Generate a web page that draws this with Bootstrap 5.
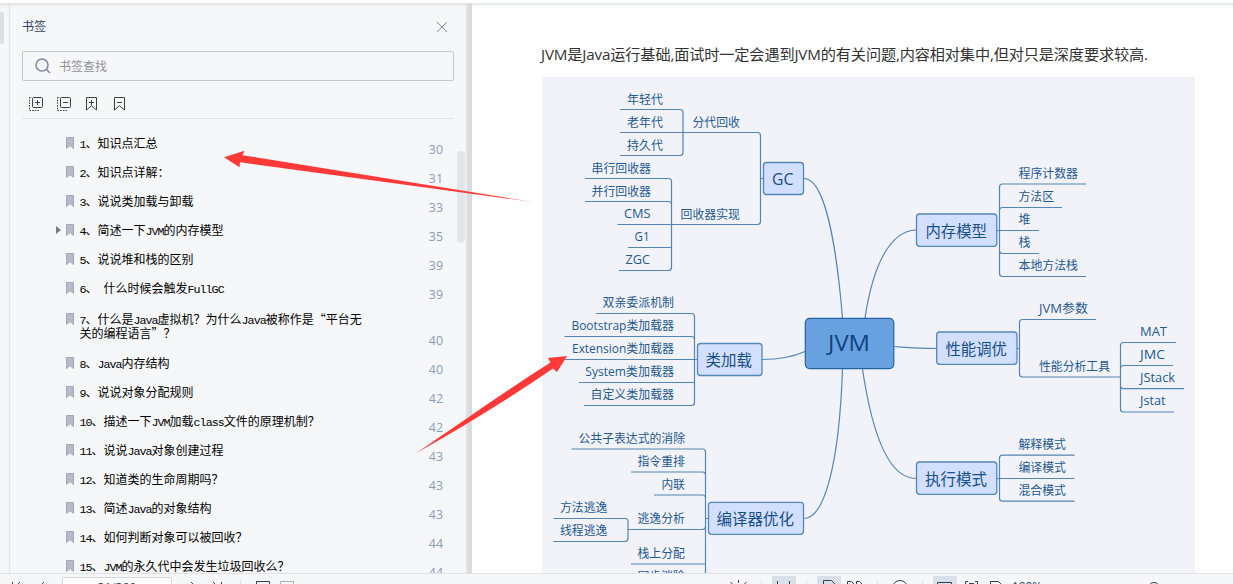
<!DOCTYPE html>
<html lang="zh-CN">
<head>
    <meta charset="UTF-8">
    <meta name="viewport" content="width=device-width, initial-scale=1">
    <title>JVM</title>
    <link href="https://cdn.jsdelivr.net/npm/bootstrap@5.3.0/dist/css/bootstrap.min.css" rel="stylesheet">
    <style>
        body { font-family: "Open Sans", "Noto Sans CJK SC", sans-serif; background: #f6f7f9; }
        svg { display: block; flex: none; }
        .top-strip { height: 3px; background: #fff; }
        .workspace { height: 570px; }
        .rail { width: 10px; border-right: 1px solid #dfe2e6; padding-top: 9px; }
        .rail-tab { width: 4px; height: 32px; background: #dce1e8; border-radius: 0 2px 2px 0; }
        .side, .rail, .page-area { box-shadow: inset 0 4px 4px -3px #d4d6d9; }
        .side { width: 456px; background: #f6f7f9; }
        .side-head { height: 48px; padding: 0 19px 0 12px; font-size: 12px; color: #33415e; }
        .search { height: 30px; margin: 0 12px; border: 1px solid #c8c9cc; border-radius: 2px; padding-left: 12px; gap: 8px; font-size: 12px; color: #909195; }
        .search span { padding-top: 1px; }
        .side-tools { height: 38px; margin: 0 12px; padding: 15px 0 0 6px; border-bottom: 1px solid #e1e3e7; }
        .marks { padding-top: 9px; }
        .mark-row { height: 29px; padding: 8px 23px 0 46px; color: #000; font: 12px/14px "Noto Sans CJK SC", sans-serif; }
        .mark-row.tall { height: 46px; padding-top: 10px; }
        .mark-text { width: 300px; padding-left: 5.5px; }
        .mark-text span { font: 11.7px/0 "Liberation Mono", monospace; letter-spacing: -1px; }
        .mark-page { font: 12.4px/14px "Open Sans", sans-serif; color: #8b9cb6; margin-top: auto; }
        .thumb { top: 32px; right: 1px; width: 8px; height: 92px; border-radius: 4px; background: #e1e4e9; }
        .splitter { width: 6px; background: #dbdbdc; border-left: 2px solid #e0e2e9; }
        .page-area { background: #fff; padding: 39px 38px 0 70px; }
        .intro { height: 35px; font-size: 15.2px; line-height: 24px; letter-spacing: -.155px; color: #333; margin: 0 0 0 -1px; }
        .status { height: 11px; border-top: 1px solid #dfe2e8; background: #f6f7f9; }
        .page-box { width: 110px; height: 24px; margin-top: 3px; border: 1px solid #d4d7dc; border-radius: 2px; background: #fff; font-size: 12px; line-height: 20px; color: #33415e; }
        .map { background: #f2f3f9; }
        .map text { fill: #24598f; font-size: 12px; }
        .map .topic { fill: #174f88; font-size: 15.5px; }
        .map .root { fill: #0d4380; font-size: 22.5px; }
        .links { fill: none; stroke: #5585b3; stroke-width: 1.2; }
        .boxes rect { fill: #d2dfff; stroke: #5488bb; stroke-width: 1.3; }
        .arrows { left: 0; top: 0; pointer-events: none; }
    </style>
</head>
<body class="overflow-hidden">

<div class="top-strip"></div>
<div class="workspace d-flex overflow-hidden">
    <div class="rail flex-shrink-0"><div class="rail-tab"></div></div>

    <!-- 书签面板 -->
    <div class="side d-flex flex-column flex-shrink-0">
        <div class="side-head d-flex align-items-center justify-content-between flex-shrink-0">
            <span>书签</span>
            <svg width="10" height="10" fill="none" stroke="#85888e"><path d="M0 0l10 10M10 0L0 10"/></svg>
        </div>
        <div class="search d-flex align-items-center flex-shrink-0">
            <svg width="16" height="16" fill="none" stroke="#7d879b" stroke-width="1.5"><circle cx="7" cy="7" r="6"/><path d="M11.3 11.3L15 15"/></svg>
            <span>书签查找</span>
        </div>
        <div class="side-tools d-flex flex-shrink-0">
            <svg width="28" height="16" fill="none" stroke="#3c4045"><rect x="4.500" y="1.500" width="10" height="10" rx="1"/><path d="M7 6.500h5M9.500 4v5"/><path d="M1.500 1v13.500H11M1 1.500h3" stroke-dasharray="1.500 1.200"/></svg>
            <svg width="28" height="16" fill="none" stroke="#3c4045"><rect x="4.500" y="1.500" width="10" height="10" rx="1"/><path d="M7 6.500h5"/><path d="M1.500 1v13.500H11M1 1.500h3" stroke-dasharray="1.500 1.200"/></svg>
            <svg width="28" height="16" fill="none" stroke="#3c4045"><path d="M2.500 14V1.500h10V14l-5-4.300zM5 6.500h5M7.500 4v5"/></svg>
            <svg width="28" height="16" fill="none" stroke="#3c4045"><path d="M2.500 14V1.500h10V14l-5-4.300zM5 6.500h5"/></svg>
        </div>
        <div class="marks position-relative" id="marks">
            <div class="thumb position-absolute"></div>
        </div>
    </div>
    <div class="splitter flex-shrink-0"></div>

    <!-- 文档页 -->
    <div class="page-area flex-grow-1">
        <p class="intro text-nowrap">JVM是Java运行基础,面试时一定会遇到JVM的有关问题,内容相对集中,但对只是深度要求较高.</p>
        <svg class="map" id="map" width="653" height="496" viewBox="542 77 653 496">
            <g class="links">
                <path d="M804 178.500C824 178.500 836 240 842.500 318M804 518.500C823 518.500 839 470 842.500 369M762 359.500C780 359.500 795 356 805 351.500M916 230C890 231 873 265 865 318M894 346.500C908 347.500 920 348.500 936 348.500M862.500 369C872 433 888 478.500 916 478.500"/>
                <!-- GC -->
                <path d="M620 109.500h60q3 0 3 3v40q0 3-3 3h-60M620 132.500h137.500q3 0 3 3v86q0 3-3 3H617.500M760.500 178.500h3"/>
                <path d="M585 178.500h83.500q3 0 3 3v86q0 3-3 3H619M585 201.500h83.500q3 0 3 3M628 247.500h43.500"/>
                <!-- 类加载 -->
                <path d="M596 313.500h95.500q3 0 3 3v86q0 3-3 3H584M564.500 336.500h127q3 0 3 3M565 359.500h132M579 382.500h115.500"/>
                <!-- 编译器优化 -->
                <path d="M571.500 449h131q3 0 3 3v122M631 472h71.500q3 0 3 3M654 495h48.500q3 0 3 3M628 529.500h74.500q3 0 3-3M631 564h74.500M705.500 518.500h3M553.500 518.500h71.500q3 0 3 3v17q0 3-3 3h-71.500"/>
                <!-- 内存模型 -->
                <path d="M1086 184h-83.500q-3 0-3 3v86.500q0 3 3 3h83.500M1062 207.500h-59.500q-3 0-3 3M997 230.500h42M1039 253.500h-36.500q-3 0-3-3"/>
                <!-- 性能调优 -->
                <path d="M1096 319.500h-73.500q-3 0-3 3v51.500q0 3 3 3h98M1017 348.500h2.500M1176 342.500h-52.500q-3 0-3 3v63.500q0 3 3 3h50.500M1173 365.500h-49.500q-3 0-3 3M1184 388.700h-60.500q-3 0-3-3"/>
                <!-- 执行模式 -->
                <path d="M1074.500 455.200h-72q-3 0-3 3v40q0 3 3 3h72M997 478.500h77.500"/>
            </g>
            <g class="boxes">
                <rect x="763.500" y="162.500" width="40" height="32" rx="3"/>
                <rect x="697.500" y="343.500" width="64.500" height="32" rx="3"/>
                <rect x="708.500" y="502.300" width="95" height="32" rx="3"/>
                <rect x="916.500" y="214" width="80.300" height="32.300" rx="3"/>
                <rect x="936.700" y="332" width="80.300" height="32.300" rx="3"/>
                <rect x="916.500" y="462" width="80.300" height="32.300" rx="3"/>
            </g>
            <rect x="805.300" y="318.300" width="88.500" height="50.300" rx="4.500" fill="#68a1df" stroke="#21669f" stroke-width="1.200"/>
        </svg>
    </div>
</div>

<!-- 底部状态栏 -->
<div class="status d-flex overflow-hidden">
    <svg width="62" height="10" viewBox="0 574 62 10" fill="none" stroke="#33415e"><path d="M12.500 582v6M20 582l-5 5M44 582l-5 5"/></svg>
    <div class="page-box text-center flex-shrink-0">31/399</div>
    <svg width="1061" height="10" viewBox="172 574 1061 10" fill="none" stroke="#33415e">
        <path d="M240.500 580v4M761.500 580v4M806.500 580v4M877.500 580v4M922.500 580v4" stroke="#dfe2e6"/>
        <path d="M772 584v-7q0-1 1-1h22q1 0 1 1v7zM817 584v-7q0-1 1-1h22q1 0 1 1v7zM933 584v-7q0-1 1-1h22q1 0 1 1v7z" fill="#dae0e8" stroke="none"/>
        <path d="M191 582l5 5M213 582l5 5M221.500 582v6M256.500 590v-8.500h13v8.500"/>
        <path d="M280.500 590v-8.500h13v8.500" stroke="#a9adb4"/>
        <path d="M738.500 580v3M730.500 582l3 3M746.500 582l-3 3M777.500 581v6M789.500 581v6"/>
        <path d="M823.500 590v-9.500h8l4 4M847.500 590v-8.500h4l3 3M856.500 590v-8.500h3l3 3"/>
        <circle cx="900" cy="588" r="7.500"/>
        <path d="M937.500 590v-7.500h14v7.500M968 581.500h-2.500v8M975 581.500h2.500v8M969 583.500h5M990.500 590v-8.500h8l4 4"/>
        <circle cx="1154" cy="588" r="5.500"/>
        <text x="1012" y="591" font-size="12" textLength="30" fill="#33415e" stroke="none">100%</text>
    </svg>
</div>

<!-- 红色标注箭头 -->
<svg class="arrows position-absolute" width="1233" height="584" fill="#fd3a38">
    <path d="M224 157.300L244.500 150.800L242.500 155.200L533 202L240 162.300L239.500 167.200z"/>
    <path d="M567.200 356L548 358L550.500 362.500C510 388 460 423 415.500 453.500C465 426 510 398 553 368.500L557 372z"/>
</svg>

<script>
    const bookmarks = [
        ["1、知识点汇总", 30],
        ["2、知识点详解：", 31],
        ["3、说说类加载与卸载", 33],
        ["4、简述一下JVM的内存模型", 35],
        ["5、说说堆和栈的区别", 39],
        ["6、 什么时候会触发FullGC", 39],
        ["7、什么是Java虚拟机？为什么Java被称作是“平台无<br>关的编程语言”？", 40],
        ["8、Java内存结构", 40],
        ["9、说说对象分配规则", 42],
        ["10、描述一下JVM加载class文件的原理机制？", 42],
        ["11、说说Java对象创建过程", 43],
        ["12、知道类的生命周期吗？", 43],
        ["13、简述Java的对象结构", 43],
        ["14、如何判断对象可以被回收？", 44],
        ["15、JVM的永久代中会发生垃圾回收么？", 44]
    ];

    // [文字, x, 基线y, 宽度, 样式]
    const labels = [
        ["年轻代", 627, 103.5, 36], ["老年代", 627, 126.5, 36], ["持久代", 627, 149.5, 36],
        ["分代回收", 692.5, 126.5, 47.5],
        ["串行回收器", 591.5, 172.5, 59.5], ["并行回收器", 591.5, 195.5, 59.5],
        ["CMS", 624, 218, 26.5], ["G1", 634.5, 241, 15], ["ZGC", 625.5, 264, 24.5],
        ["回收器实现", 680.5, 218.5, 59.5],
        ["双亲委派机制", 602.5, 307, 71.5], ["Bootstrap类加载器", 571.5, 330, 102.5],
        ["Extension类加载器", 572, 353, 102], ["System类加载器", 585.3, 376, 88.7],
        ["自定义类加载器", 590.5, 399, 83.5],
        ["公共子表达式的消除", 578.5, 442.5, 106.5], ["指令重排", 637.5, 465.5, 47.5],
        ["内联", 661.5, 488.5, 23.5], ["逃逸分析", 637.5, 523, 47.5],
        ["方法逃逸", 560, 511.5, 47.5], ["线程逃逸", 560, 534.5, 47.5],
        ["栈上分配", 637.5, 557.5, 47.5], ["同步消除", 637.5, 580.5, 47.5],
        ["程序计数器", 1018.5, 178, 59.5], ["方法区", 1018.5, 201, 35.5],
        ["堆", 1018.5, 224, 12], ["栈", 1018.5, 247, 12], ["本地方法栈", 1018.5, 270, 59.5],
        ["JVM参数", 1039, 313, 49], ["性能分析工具", 1039, 370.5, 71],
        ["MAT", 1140, 336, 27], ["JMC", 1140, 359, 25], ["JStack", 1140, 382, 35], ["Jstat", 1140, 405, 25.5],
        ["解释模式", 1018.5, 449, 47.5], ["编译模式", 1018.5, 472, 47.5], ["混合模式", 1018.5, 495, 47.5],
        ["GC", 772, 184.5, 21.5, "topic"], ["类加载", 705.5, 366, 46.5, "topic"],
        ["编译器优化", 716.5, 524.5, 77.5, "topic"], ["内存模型", 925.5, 236.5, 61.5, "topic"],
        ["性能调优", 945.5, 355, 61.5, "topic"], ["执行模式", 925, 484.5, 62, "topic"],
        ["JVM", 828, 351, 42, "root"]
    ];

    const marks = document.getElementById("marks");
    bookmarks.forEach(([title, page], i) => {
        const row = document.createElement("div");
        row.className = "mark-row d-flex" + (title.includes("<br>") ? " tall" : "");
        const text = title.split("<br>").map(s => s.replace(/[\x20-\x7e]+/g, "<span>$&</span>")).join("<br>");
        row.innerHTML = `
            <svg width="18" height="14" viewBox="0 0 18 14">
                ${i === 3 ? '<path d="M0 3v8l5-4z" fill="#727b8c"/>' : ""}
                <path d="M10.500 12.500v-11h7v11l-3.500-3z" fill="#b5bbc7" stroke="#a1a9b8"/>
            </svg>
            <div class="mark-text text-nowrap">${text}</div>
            <div class="mark-page ms-auto">${page}</div>`;
        marks.appendChild(row);
    });

    const map = document.getElementById("map");
    labels.forEach(([label, x, y, width, cls]) => {
        const t = document.createElementNS("http://www.w3.org/2000/svg", "text");
        t.textContent = label;
        t.setAttribute("x", x);
        t.setAttribute("y", y);
        t.setAttribute("textLength", width);
        t.setAttribute("lengthAdjust", "spacingAndGlyphs");
        if (cls) t.setAttribute("class", cls);
        map.appendChild(t);
    });
</script>

<script src="https://cdn.jsdelivr.net/npm/bootstrap@5.3.0/dist/js/bootstrap.bundle.min.js"></script>
</body>
</html>
